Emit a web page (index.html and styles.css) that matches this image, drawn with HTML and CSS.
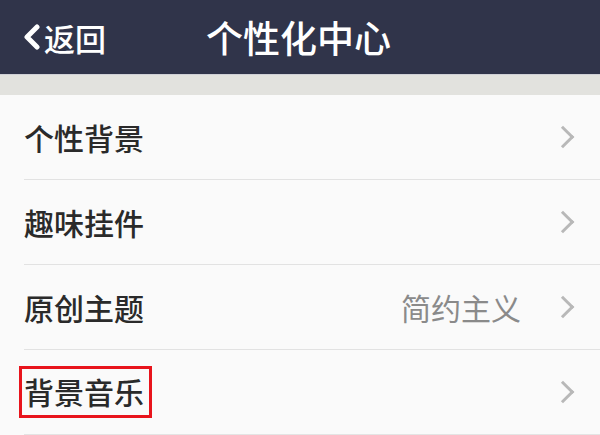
FILE: index.html
```html
<!DOCTYPE html>
<html>
<head>
<title>个性化中心</title>
<link rel="stylesheet" href="styles.css">
</head>
<body>
<div class = 'navbar'>
    <div class = 'back'>
        <svg class = 'backarrow' width = '20' height = '26' viewBox = '0 0 20 26'><path d = 'M15 3 L5 13 L15 23' fill = 'none' stroke = '#fff' stroke-width = '5' stroke-linecap = 'round' stroke-linejoin = 'round'/></svg>
        <span>返回</span>
    </div>
    <div class = 'title'>个性化中心</div>
</div>
<div class = 'band'></div>
<div class = 'list'>
    <div class = 'row'>
        <span class = 'label'>个性背景</span>
        <span class = 'chev'></span>
    </div>
    <div class = 'row'>
        <span class = 'label'>趣味挂件</span>
        <span class = 'chev'></span>
    </div>
    <div class = 'row'>
        <span class = 'label'>原创主题</span>
        <span class = 'value'>简约主义</span>
        <span class = 'chev'></span>
    </div>
    <div class = 'row last'>
        <span class = 'label boxed'>背景音乐</span>
        <span class = 'chev'></span>
    </div>
</div>
</body>
</html>
```
FILE: styles.css
```css
body {
    margin: 0;
    background-color: #fafafa;
    font-family: "Noto Sans CJK SC", "Noto Sans", sans-serif;
    overflow: hidden;
}
.navbar {
    height: 74px;
    background-color: #30344a;
    display: flex;
    align-items: center;
    color: #fff;
}
.back {
    display: flex;
    align-items: center;
    padding-left: 22px;
    font-size: 31px;
    font-weight: 500;
}
.back span {
    margin-left: 2px;
}
.title {
    font-size: 37px;
    font-weight: 500;
    margin-left: 100px;
}
.band {
    height: 20px;
    background-color: #e2e2de;
    border-top: 1px solid #cfd0d6;
}
.list {
    background-color: #fafafa;
}
.row {
    height: 84px;
    margin-left: 24px;
    padding-right: 25px;
    border-bottom: 1px solid #e2e2e2;
    display: flex;
    align-items: center;
}
.row.last {
    border-bottom: 3px solid #e4e4e4;
}
.label {
    font-size: 30px;
    font-weight: 500;
    color: #2a2a2a;
    flex: 1;
}
.boxed {
    flex: none;
    border: 3px solid #e8141c;
    padding: 3px 5px 4px 2px;
    margin-left: -5px;
    line-height: 1.3;
}
.row.last .chev {
    margin-left: auto;
}
.value {
    font-size: 30px;
    color: #8a8a8a;
    margin-right: 34px;
}
.chev {
    width: 13px;
    height: 13px;
    border-top: 3px solid #b8b8b8;
    border-right: 3px solid #b8b8b8;
    transform: rotate(45deg);
    margin-right: 4px;
}
```
